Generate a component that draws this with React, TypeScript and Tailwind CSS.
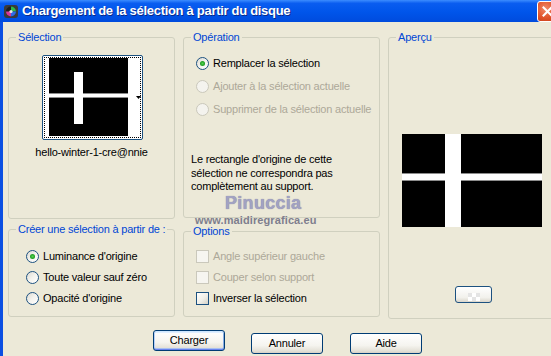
import React from "react";

function Group({
  legend,
  className,
  children,
}: {
  legend: string;
  className: string;
  children?: React.ReactNode;
}) {
  return (
    <div className={"relative rounded-[3px] border border-[#D0D0BF] " + className}>
      <span className="absolute left-[7px] top-[-6px] bg-[#ECE9D8] px-[2px] text-[11px] leading-[11px] tracking-[-0.2px] text-[#0046D5]">
        {legend}
      </span>
      {children}
    </div>
  );
}

function Radio({ checked, disabled }: { checked?: boolean; disabled?: boolean }) {
  return (
    <span
      className={
        "flex h-[13px] w-[13px] shrink-0 items-center justify-center rounded-full border " +
        (disabled
          ? "border-[#CAC8BB] bg-[#F4F3EE]"
          : "border-[#1C5180] bg-[linear-gradient(135deg,#DCDAD2_0%,#F4F3EE_50%,#FFFFFF_100%)]")
      }
    >
      {checked && <span className="h-[5px] w-[5px] rounded-full bg-[radial-gradient(circle,#55D155_0%,#21A121_60%,#1A8A1A_100%)]" />}
    </span>
  );
}

function Check({ disabled }: { disabled?: boolean }) {
  return (
    <span
      className={
        "block h-[13px] w-[13px] shrink-0 border " +
        (disabled
          ? "border-[#CAC8BB] bg-[#F6F5F0]"
          : "border-[#1C5180] bg-[linear-gradient(135deg,#FFFFFF_0%,#F0EFE8_55%,#D4D1C6_100%)]")
      }
    />
  );
}

function Row({ children, label, disabled }: { children: React.ReactNode; label: string; disabled?: boolean }) {
  return (
    <div className="flex h-[13px] items-center gap-[4px]">
      {children}
      <span className={"text-[11px] leading-[13px] tracking-[-0.2px] " + (disabled ? "text-[#ACA899]" : "text-black")}>
        {label}
      </span>
    </div>
  );
}

function Button({ label, main }: { label: string; main?: boolean }) {
  return (
    <button
      className={
        "h-[21px] w-[72px] rounded-[3px] border border-[#003C74] bg-[linear-gradient(180deg,#FFFFFF_0%,#F5F4EF_60%,#E3E0D6_90%,#D6D0C5_100%)] text-[11px] leading-[13px] tracking-[-0.2px] text-black " +
        (main
          ? "shadow-[inset_0_1px_0_#CEE7FF,inset_0_-1px_0_#6982EE,inset_1px_0_0_#B8D0F8,inset_-1px_0_0_#89ADE4,inset_0_2px_0_#E0EEFF,inset_0_-2px_0_#A9C0F0]"
          : "")
      }
    >
      {label}
    </button>
  );
}

function Cross({ w, h, vx, vw, vy, vh, hy, hh }: { w: number; h: number; vx: number; vw: number; vy: number; vh: number; hy: number; hh: number }) {
  return (
    <svg width={w} height={h} className="block">
      <rect x="0" y="0" width={w} height={h} fill="#000" />
      <rect x="0" y={hy} width={w} height={hh} fill="#8C8C8C" />
      <rect x="0" y={hy + 1} width={w} height={hh - 2} fill="#fff" />
      <rect x={vx} y={vy} width={vw} height={vh} fill="#fff" />
    </svg>
  );
}

export default function App() {
  return (
    <div className="relative h-[356px] w-[551px] overflow-hidden bg-[#ECE9D8] font-['Liberation_Sans',Arial,sans-serif]">
      <div className="w-[560px]">
        {/* title bar */}
        <div className="flex h-[22px] items-center bg-[linear-gradient(180deg,#3C8DFF_0%,#0A5DF0_15%,#0055EA_55%,#004BDD_100%)]">
          <svg width="16" height="16" viewBox="0 0 16 16" className="ml-[3px] shrink-0">
            <rect x="1" y="2" width="14" height="13" rx="3" fill="#3A3A3A" />
            <circle cx="8" cy="8.5" r="5" fill="#1E1E1E" />
            <path d="M8 8.5 L8 3.5 A5 5 0 0 1 13 8.5 Z" fill="#2FB84A" />
            <path d="M8 8.5 L13 8.5 A5 5 0 0 1 8 13.5 Z" fill="#2E6BE6" />
            <path d="M8 8.5 L8 13.5 A5 5 0 0 1 3 8.5 Z" fill="#D8389A" />
            <circle cx="8" cy="8.5" r="1.6" fill="#E8E8E8" />
          </svg>
          <span className="ml-[3px] text-[13px] font-bold leading-[16px] tracking-[-0.3px] text-white [text-shadow:1px_1px_0_#0A2A8A]">
            Chargement de la sélection à partir du disque
          </span>
          <div className="ml-auto mr-[2px] flex h-[21px] w-[21px] items-center justify-center rounded-[3px] border border-white bg-[radial-gradient(circle_at_40%_35%,#F08A6A_0%,#E0542A_55%,#C23A16_100%)]">
            <svg width="11" height="11" viewBox="0 0 11 11">
              <path d="M1.5 1.5 L9.5 9.5 M9.5 1.5 L1.5 9.5" stroke="#fff" strokeWidth="2" strokeLinecap="square" />
            </svg>
          </div>
        </div>

        {/* body */}
        <div className="flex h-[334px] flex-col border-l-[3px] border-[#0B4FE2]">
          <div className="flex pl-[5px]">
            {/* left column */}
            <div className="flex w-[167px] flex-col pt-[15px]">
              <Group legend="Sélection" className="h-[182px]">
                <div className="pl-[33px] pt-[17px]">
                  <div className="relative flex h-[85px] w-[101px] rounded-[2px] border border-[#1C5180] bg-white pl-[6px] pt-[2px]">
                    <div className="pointer-events-none absolute inset-[1px] border border-dotted border-black" />
                    <Cross w={79} h={78} vx={25} vw={9} vy={14} vh={52} hy={35} hh={5} />
                    <div className="flex h-[78px] items-center pl-[8px]">
                      <svg width="5" height="3" viewBox="0 0 5 3">
                        <path d="M0 0 H5 L2.5 3 Z" fill="#000" />
                      </svg>
                    </div>
                  </div>
                </div>
                <div className="mt-[6px] text-center text-[11px] leading-[13px] tracking-[-0.2px] text-black">
                  hello-winter-1-cre@nnie
                </div>
              </Group>
              <Group legend="Créer une sélection à partir de :" className="mt-[10px] h-[88px]">
                <div className="flex flex-col gap-[8px] pl-[17px] pt-[20px]">
                  <Row label="Luminance d'origine">
                    <Radio checked />
                  </Row>
                  <Row label="Toute valeur sauf zéro">
                    <Radio />
                  </Row>
                  <Row label="Opacité d'origine">
                    <Radio />
                  </Row>
                </div>
              </Group>
            </div>

            {/* middle column */}
            <div className="ml-[8px] flex w-[197px] flex-col pt-[15px]">
              <Group legend="Opération" className="h-[181px]">
                <div className="flex flex-col gap-[10px] pl-[12px] pt-[19px]">
                  <Row label="Remplacer la sélection">
                    <Radio checked />
                  </Row>
                  <Row label="Ajouter à la sélection actuelle" disabled>
                    <Radio disabled />
                  </Row>
                  <Row label="Supprimer de la sélection actuelle" disabled>
                    <Radio disabled />
                  </Row>
                </div>
                <p className="mt-[37px] pl-[7px] text-[11px] leading-[13.5px] tracking-[-0.2px] text-black">
                  Le rectangle d'origine de cette
                  <br />
                  sélection ne correspondra pas
                  <br />
                  complètement au support.
                </p>
              </Group>
              <Group legend="Options" className="mt-[13px] h-[86px]">
                <div className="flex flex-col gap-[8px] pl-[12px] pt-[18px]">
                  <Row label="Angle supérieur gauche" disabled>
                    <Check disabled />
                  </Row>
                  <Row label="Couper selon support" disabled>
                    <Check disabled />
                  </Row>
                  <Row label="Inverser la sélection">
                    <Check />
                  </Row>
                </div>
              </Group>
            </div>

            {/* right column */}
            <div className="ml-[8px] flex w-[170px] flex-col pt-[15px]">
              <Group legend="Aperçu" className="h-[282px]">
                <div className="pl-[13px] pt-[96px]">
                  <Cross w={140} h={93} vx={43} vw={16} vy={0} vh={93} hy={39} hh={8} />
                </div>
                <div className="ml-[66px] mt-[59px] flex h-[17px] w-[37px] items-end justify-center rounded-[3px] border border-[#1C5180] bg-[linear-gradient(180deg,#FFFFFF_0%,#F2F1EC_70%,#DAD6CB_100%)]">
                  <svg width="12" height="8" viewBox="0 0 12 8" className="mb-[1px]">
                    <rect x="0" y="0" width="4" height="4" fill="#E4E4E4" />
                    <rect x="4" y="0" width="4" height="4" fill="#FFFFFF" />
                    <rect x="8" y="0" width="4" height="4" fill="#E4E4E4" />
                    <rect x="0" y="4" width="4" height="4" fill="#FFFFFF" />
                    <rect x="4" y="4" width="4" height="4" fill="#E4E4E4" />
                    <rect x="8" y="4" width="4" height="4" fill="#FFFFFF" />
                  </svg>
                </div>
              </Group>
            </div>
          </div>

          {/* buttons */}
          <div className="ml-[150px] mt-[11px] flex">
            <Button label="Charger" main />
            <div className="ml-[26px]">
              <Button label="Annuler" />
            </div>
            <div className="ml-[27px]">
              <Button label="Aide" />
            </div>
          </div>
        </div>
      </div>

      {/* watermark */}
      <div className="pointer-events-none absolute left-[225px] top-[194px] text-[18px] font-bold leading-[18px] tracking-[0.3px] text-[#A2A2C2] [text-shadow:0_0_1px_#7A7A9A]">
        Pinuccia
      </div>
      <div className="pointer-events-none absolute left-[195px] top-[216px] text-[11px] font-semibold leading-[9px] tracking-[0.1px] text-[#7E7E8E]">
        www.maidiregrafica.eu
      </div>
    </div>
  );
}
